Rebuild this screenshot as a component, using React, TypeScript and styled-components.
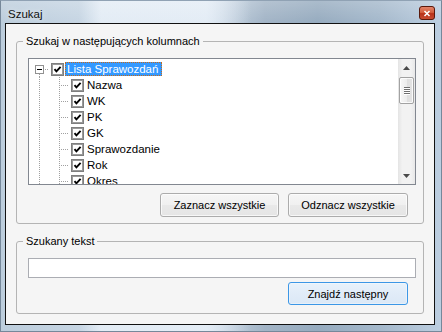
import React from 'react';
import styled, { createGlobalStyle } from 'styled-components';

const GlobalStyle = createGlobalStyle`
  html, body {
    margin: 0;
    padding: 0;
    background: #fff;
  }
  body {
    font-family: "Liberation Sans", Arial, sans-serif;
    font-size: 11px;
    color: #000;
  }
`;

const Window = styled.div`
  width: 442px;
  height: 332px;
  box-sizing: border-box;
  padding: 0 6px 6px 4px;
  display: flex;
  flex-direction: column;
  background:
    linear-gradient(to bottom, rgba(255, 255, 255, 0.2), rgba(255, 255, 255, 0) 22px),
    linear-gradient(to right, rgba(255, 255, 255, 0) 78px, rgba(232, 240, 248, 0.85) 100px, rgba(232, 240, 248, 0.85) 205px, rgba(255, 255, 255, 0) 250px),
    linear-gradient(to right, #bccddc 0%, #c6d5e3 18%, #c9d7e5 48%, #a2b4c6 60%, #96abbf 72%, #a4b8cb 86%, #bccee0 100%);
  border: 1px solid #76889a;
  border-top-color: #90a2b4;
`;

const TitleBar = styled.div`
  height: 22px;
  flex: none;
  display: flex;
  align-items: flex-start;
  justify-content: space-between;
  padding-left: 3px;
`;

const Caption = styled.span`
  font-size: 11.5px;
  line-height: 14px;
  margin-top: 6px;
  color: #111;
  text-shadow: 0 0 6px rgba(255, 255, 255, 0.9);
`;

const CloseButton = styled.div`
  width: 16px;
  height: 14px;
  margin-top: 5px;
  box-sizing: border-box;
  border: 1px solid #5a1a0d;
  border-radius: 3px;
  background-color: #c4402a;
  background-image: linear-gradient(to bottom, #e2836a 0%, #d4603f 45%, #b8321a 55%, #c94c30 100%);
  display: flex;
  align-items: center;
  justify-content: center;
`;

const Client = styled.div`
  flex: 1;
  box-sizing: border-box;
  border: 1px solid #111;
  background: #f5f5f5;
  padding: 10px;
  display: flex;
  flex-direction: column;
  gap: 10px;
`;

const GroupBox = styled.fieldset`
  margin: 0;
  padding: 10px 7px 0 11px;
  min-inline-size: 0;
  border: 1px solid #b4b4b4;
  border-radius: 3px;
  box-sizing: border-box;
  display: flex;
  flex-direction: column;
`;

const Legend = styled.legend`
  padding: 0 3px;
  margin-left: -5px;
  font-size: 11px;
  line-height: 14px;
  color: #000;
`;

const Tree = styled.div`
  width: 388px;
  height: 127px;
  box-sizing: border-box;
  border: 1px solid #828790;
  background: #fff;
  display: flex;
`;

const TreeBody = styled.div`
  flex: 1;
  overflow: hidden;
  padding-top: 2px;
`;

const Row = styled.div`
  display: flex;
  align-items: center;
  height: 16px;
`;

const dotsV = 'repeating-linear-gradient(to bottom, #a0a0a0 0 1px, transparent 1px 2px)';
const dotsH = 'repeating-linear-gradient(to right, #a0a0a0 0 1px, transparent 1px 2px)';

const Guide = styled.div<{ $kind: 'root' | 'trunk' | 'branch' }>`
  width: 20px;
  height: 16px;
  flex: none;
  display: flex;
  align-items: center;
  background: ${p =>
    p.$kind === 'root'
      ? `${dotsV} no-repeat 10px 13px / 1px 3px, ${dotsH} no-repeat 14px 8px / 6px 1px`
      : p.$kind === 'trunk'
      ? `${dotsV} no-repeat 10px 0 / 1px 16px`
      : `${dotsV} no-repeat 10px 0 / 1px 16px, ${dotsH} no-repeat 12px 8px / 8px 1px`};
`;

const Expander = styled.div`
  width: 9px;
  height: 9px;
  margin-left: 6px;
  margin-top: 1px;
  box-sizing: border-box;
  border: 1px solid #919191;
  background: #fff;
  display: flex;
  align-items: center;
  justify-content: center;
  &::after {
    content: '';
    width: 5px;
    height: 1px;
    background: #000;
  }
`;

const CheckWrap = styled.div`
  width: 13px;
  height: 13px;
  flex: none;
  margin-left: 2px;
  display: flex;
`;

const Label = styled.span<{ $selected?: boolean }>`
  margin-left: 1px;
  padding: 0 3px 0 1px;
  height: 14px;
  box-sizing: border-box;
  line-height: 12px;
  font-size: 11.5px;
  white-space: nowrap;
  border: 1px ${p => (p.$selected ? 'dotted #c56a1a' : 'solid transparent')};
  background: ${p => (p.$selected ? '#3399ff' : 'transparent')};
  color: ${p => (p.$selected ? '#fff' : '#000')};
`;

const Scrollbar = styled.div`
  width: 17px;
  flex: none;
  display: flex;
  flex-direction: column;
  background: linear-gradient(to right, #e4e4e4 0%, #f2f2f2 25%, #f2f2f2 75%, #e8e8e8 100%);
`;

const ArrowCell = styled.div`
  height: 17px;
  flex: none;
  display: flex;
  align-items: center;
  justify-content: center;
`;

const Track = styled.div`
  flex: 1;
  display: flex;
  flex-direction: column;
  align-items: center;
`;

const Thumb = styled.div<{ $top: number; $size: number }>`
  margin-top: ${p => p.$top}px;
  width: 15px;
  height: ${p => p.$size}px;
  box-sizing: border-box;
  border: 1px solid #a2a2a2;
  border-radius: 2px;
  background: linear-gradient(to right, #f7f7f7 0%, #ececec 50%, #dedede 51%, #e4e4e4 100%);
  box-shadow: inset 0 0 0 1px rgba(255, 255, 255, 0.8);
  display: flex;
  flex-direction: column;
  align-items: center;
  justify-content: center;
  gap: 1px;
`;

const Grip = styled.div`
  width: 6px;
  height: 1px;
  background: #6f6f6f;
  box-shadow: 0 1px 0 #fff;
`;

const ButtonRow = styled.div`
  display: flex;
  justify-content: flex-end;
  gap: 9px;
  padding-right: 8px;
  margin-top: 8px;
  margin-bottom: 6px;
`;

const Button = styled.button<{ $default?: boolean; $w: number; $h: number }>`
  width: ${p => p.$w}px;
  height: ${p => p.$h}px;
  box-sizing: border-box;
  padding: 0;
  font-family: "Liberation Sans", Arial, sans-serif;
  font-size: 11px;
  color: #000;
  border-radius: 3px;
  border: 1px solid ${p => (p.$default ? '#3c97e6' : '#acacac')};
  background: ${p =>
    p.$default
      ? 'linear-gradient(to bottom, #e8f2fb 0%, #e1ecf8 50%, #dbe8f6 100%)'
      : 'linear-gradient(to bottom, #f6f6f6 0%, #f0f0f0 50%, #e9e9e9 51%, #e5e5e5 100%)'};
  box-shadow: inset 0 0 0 1px ${p => (p.$default ? 'rgba(255,255,255,0.35)' : 'rgba(255,255,255,0.7)')};
`;

const SearchInput = styled.input`
  width: 388px;
  height: 20px;
  box-sizing: border-box;
  border: 1px solid #abadb3;
  background: #fff;
  margin: 0;
  padding: 0 3px;
  font-family: "Liberation Sans", Arial, sans-serif;
  font-size: 11px;
  outline: none;
`;

const SearchActions = styled.div`
  display: flex;
  justify-content: flex-end;
  padding-right: 8px;
  margin-top: 4px;
  margin-bottom: 8px;
`;

const CheckBox = () => (
  <CheckWrap>
    <svg width="13" height="13" viewBox="0 0 13 13">
      <rect x="0.5" y="0.5" width="12" height="12" fill="#fff" stroke="#7e7e7e" />
      <rect x="1.5" y="1.5" width="10" height="10" fill="#fff" stroke="#9a9a9a" />
      <path d="M3.5 6.2 L5.4 8.3 L9.6 3.9" fill="none" stroke="#000" strokeWidth="1.9" />
    </svg>
  </CheckWrap>
);

const columns = ['Nazwa', 'WK', 'PK', 'GK', 'Sprawozdanie', 'Rok', 'Okres'];

const App = () => {
  return (
    <>
      <GlobalStyle />
      <Window>
        <TitleBar>
          <Caption>Szukaj</Caption>
          <CloseButton>
            <svg width="8" height="7" viewBox="0 0 8 7">
              <path d="M1.5 1 L6.5 6 M6.5 1 L1.5 6" stroke="#fff" strokeWidth="1.5" />
            </svg>
          </CloseButton>
        </TitleBar>
        <Client>
          <GroupBox>
            <Legend>Szukaj w następujących kolumnach</Legend>
            <Tree>
              <TreeBody>
                <Row>
                  <Guide $kind="root">
                    <Expander />
                  </Guide>
                  <CheckBox />
                  <Label $selected>Lista Sprawozdań</Label>
                </Row>
                {columns.map(name => (
                  <Row key={name}>
                    <Guide $kind="trunk" />
                    <Guide $kind="branch" />
                    <CheckBox />
                    <Label>{name}</Label>
                  </Row>
                ))}
              </TreeBody>
              <Scrollbar>
                <ArrowCell>
                  <svg width="7" height="4" viewBox="0 0 7 4">
                    <path d="M0 4 L3.5 0 L7 4 Z" fill="#4a4a4a" />
                  </svg>
                </ArrowCell>
                <Track>
                  <Thumb $top={1} $size={27}>
                    <Grip />
                    <Grip />
                    <Grip />
                    <Grip />
                  </Thumb>
                </Track>
                <ArrowCell>
                  <svg width="7" height="4" viewBox="0 0 7 4">
                    <path d="M0 0 L7 0 L3.5 4 Z" fill="#4a4a4a" />
                  </svg>
                </ArrowCell>
              </Scrollbar>
            </Tree>
            <ButtonRow>
              <Button $w={119} $h={24}>Zaznacz wszystkie</Button>
              <Button $w={120} $h={24}>Odznacz wszystkie</Button>
            </ButtonRow>
          </GroupBox>
          <GroupBox>
            <Legend>Szukany tekst</Legend>
            <SearchInput type="text" defaultValue="" />
            <SearchActions>
              <Button $default $w={120} $h={23}>Znajdź następny</Button>
            </SearchActions>
          </GroupBox>
        </Client>
      </Window>
    </>
  );
};

export default App;
